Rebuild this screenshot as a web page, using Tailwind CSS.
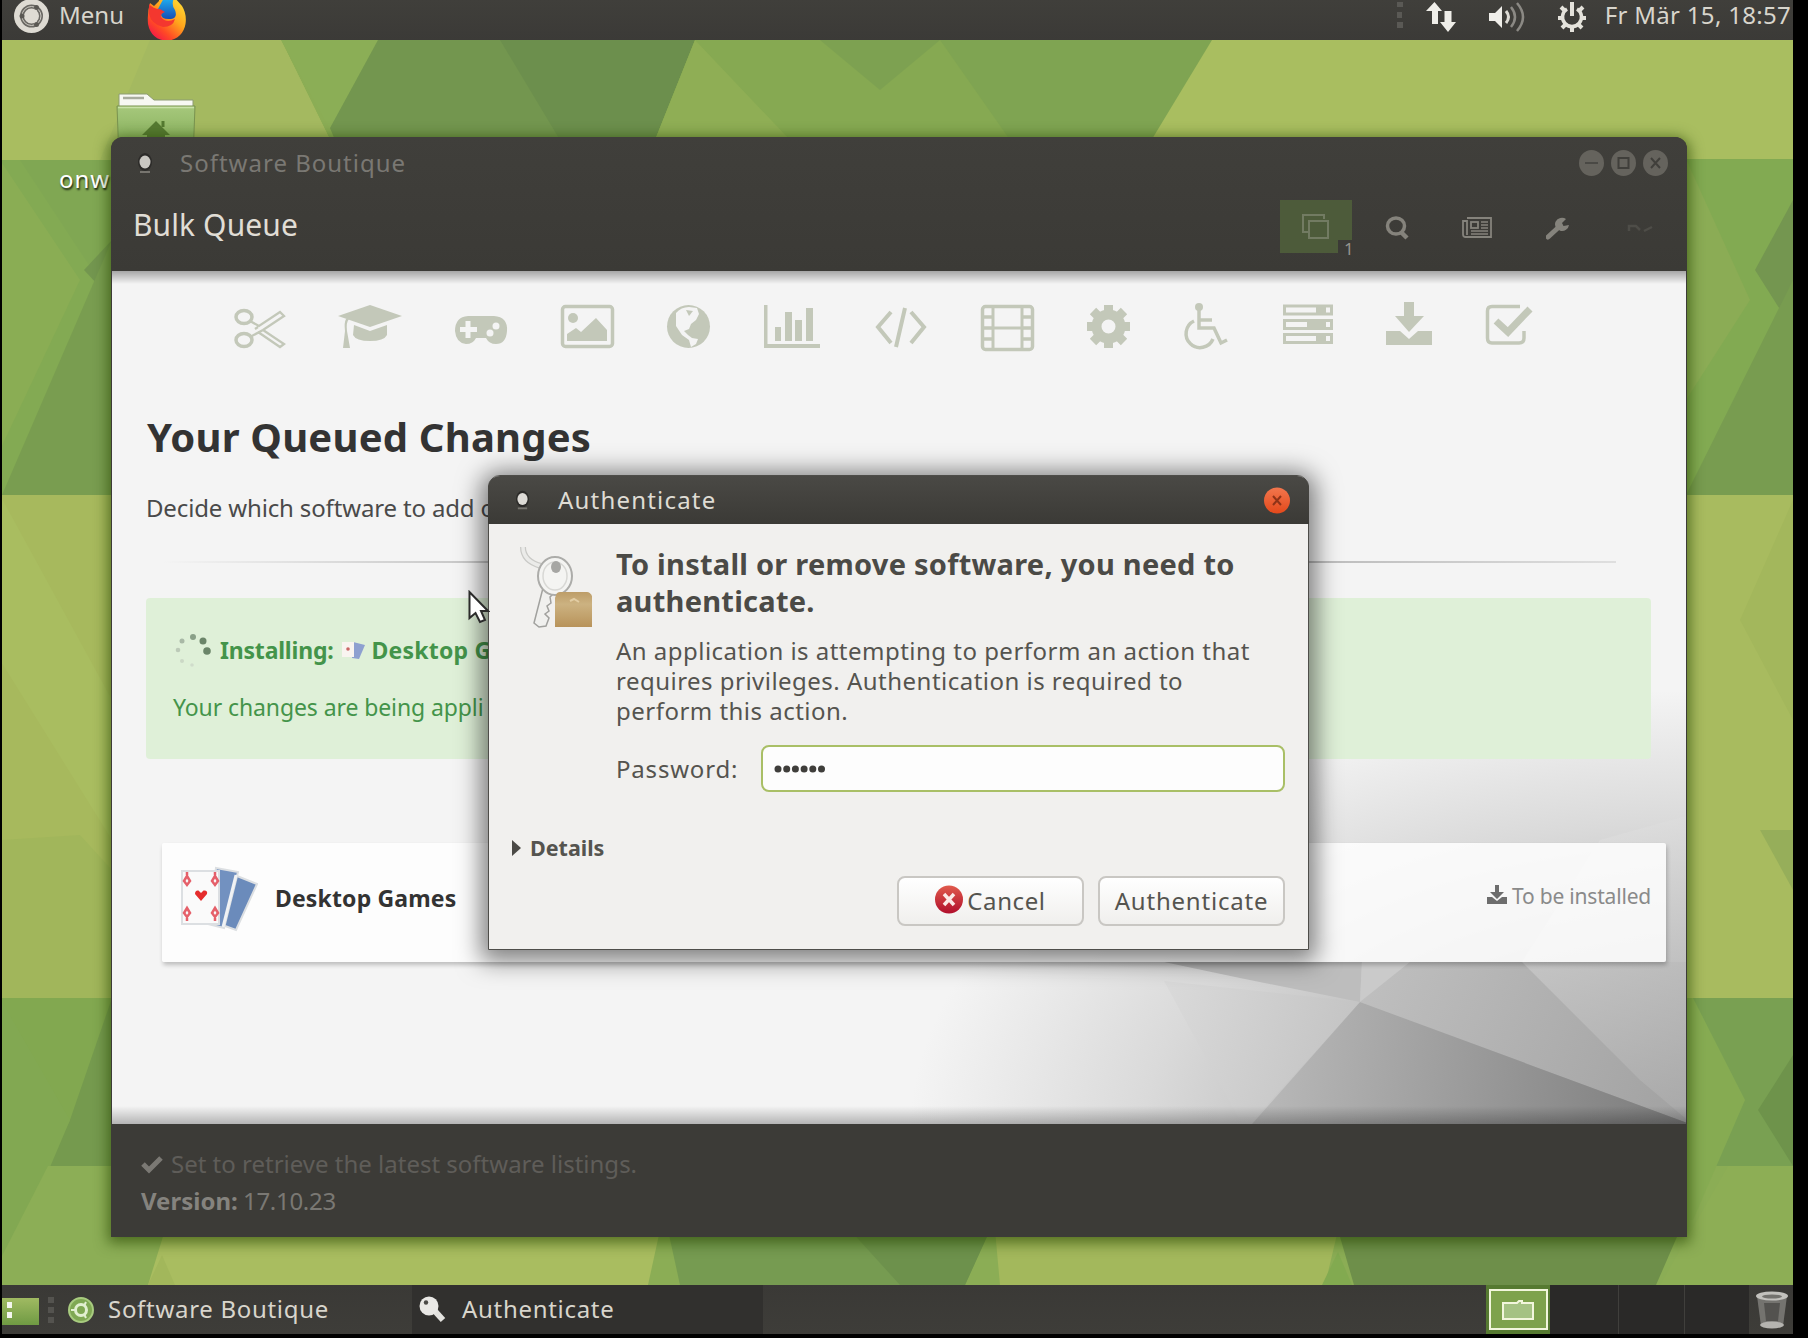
<!DOCTYPE html>
<html lang="en">
<head>
<meta charset="utf-8">
<title>Software Boutique</title>
<script src="https://cdn.jsdelivr.net/npm/@tailwindcss/browser@4"></script>
</head>
<body class="bg-black">
<div class="relative w-[1808px] h-[1338px] overflow-hidden bg-black font-['Noto_Sans',sans-serif] text-[24px] leading-[30px] text-[#d8d5cc] whitespace-nowrap">

  <div class="ml-[2px] w-[1791px] h-[1334px] flex flex-col">
    <!-- Top panel -->
    <header class="h-[40px] shrink-0 flex items-start bg-linear-to-b from-[#403f3b] to-[#3b3a37] pl-[12px] pr-[2px]">
      <svg class="w-[35px] h-[35px] -mt-[1px] shrink-0" viewBox="0 0 35 35">
        <ellipse cx="17.500" cy="17" rx="17.500" ry="17" fill="#dedbd3"/>
        <circle cx="17.500" cy="17" r="9.500" fill="none" stroke="#6a6863" stroke-width="4"/>
        <circle cx="17.500" cy="17" r="9.500" fill="none" stroke="#cfccc4" stroke-width="1"/>
        <path d="M17 17L4 17M18 17L24 6M18 17L24 28" stroke="#dedbd3" stroke-width="3"/>
        <circle cx="8" cy="17" r="2.500" fill="#5a5853"/><circle cx="22.500" cy="8.500" r="2.500" fill="#5a5853"/><circle cx="22.500" cy="25.500" r="2.500" fill="#5a5853"/>
        <circle cx="17.500" cy="17" r="5.500" fill="#dedbd3"/>
      </svg>
      <span class="ml-[10px]">Menu</span>
      <svg class="ml-[23px] w-[40px] h-[41px] shrink-0" viewBox="0 0 40 41">
        <defs>
          <linearGradient id="fx" x1="1" y1="0" x2="0.200" y2="1"><stop offset="0" stop-color="#ffe93b"/><stop offset=".45" stop-color="#ffa51c"/><stop offset=".75" stop-color="#ff4a25"/><stop offset="1" stop-color="#f2134c"/></linearGradient>
          <linearGradient id="fb" x1="0" y1="0" x2="0" y2="1"><stop offset="0" stop-color="#1fb0f0"/><stop offset="1" stop-color="#174db4"/></linearGradient>
        </defs>
        <path d="M12 -2H28L35 6Q40 14 38.500 24Q36 38 21 41Q4 40 1 24Q0 12 3 3L7 6L12 1Z" fill="url(#fx)"/>
        <path d="M17 -2H27Q24 5 28 10Q31 18 24 19Q13 20 14 12L11 9Q14 3 17 -2Z" fill="url(#fb)"/>
        <path d="M2 4Q6 9 13 9L18 12Q13 14 14 17Q19 24 28 19Q26 27 16 27Q4 24 2 14Z" fill="#f4372f"/>
      </svg>
      <div class="flex-1"></div>
      <svg class="w-[8px] h-[34px] shrink-0" viewBox="0 0 8 34" fill="#5a5955"><rect x="1" y="2" width="6" height="5"/><rect x="1" y="12" width="5" height="6"/><rect x="1" y="22" width="6" height="6"/></svg>
      <svg class="ml-[22px] w-[30px] h-[34px] shrink-0" viewBox="0 0 30 34" fill="#efeee9"><path d="M8.500 2L16 11H12V24H6V11H0ZM22 32L14 22H18.500V11H25.500V22H30Z"/></svg>
      <svg class="ml-[33px] w-[36px] h-[34px] shrink-0" viewBox="0 0 36 34"><path d="M0 13H6L13 6V28L6 21H0Z" fill="#efeee9"/><path d="M17 11Q22 17 17 23" fill="none" stroke="#dddbd5" stroke-width="3"/><path d="M22 7Q30 17 22 27M28 3Q40 17 28 31" fill="none" stroke="#8b8984" stroke-width="2.500"/></svg>
      <svg class="ml-[32px] w-[30px] h-[34px] shrink-0" viewBox="0 0 30 34" fill="none" stroke="#e4e2db"><path d="M10 9A9.500 9.500 0 1 0 20 9" stroke-width="3.500"/><path d="M15 2V16" stroke-width="4"/><path d="M5 18H1M29 18H25M7 10L4 7M23 10L26 7M8 25L5 28M22 25L25 28M15 27V32" stroke-width="4"/></svg>
      <span class="ml-[18px] tracking-[0.3px]">Fr Mär 15, 18:57</span>
    </header>

    <!-- Wallpaper -->
    <main class="h-[1245px] shrink-0 relative overflow-hidden bg-[#8aad53]">
      <svg class="absolute inset-0 w-[1791px] h-[1245px]" viewBox="2 40 1791 1245">
        <rect x="0" y="40" width="1808" height="1245" fill="#8bad55"/>
        <path d="M0 40H281L340 160H0Z" fill="#a9bd60"/>
        <path d="M150 40H281L340 160H100Z" fill="#a4b960"/>
        <path d="M281 40H378L330 130Z" fill="#8bae56"/>
        <path d="M378 40H695L655 140H335L330 128Z" fill="#73964f"/>
        <path d="M500 40H695L655 140H560Z" fill="#6c8f4d"/>
        <path d="M695 40H1212L1170 140H655Z" fill="#86a952"/>
        <path d="M695 40L790 140H655Z" fill="#8fae55"/>
        <path d="M820 40H940L880 90Z" fill="#7da151"/>
        <path d="M940 40H1212L1170 140H1010Z" fill="#7fa452"/>
        <path d="M1212 40H1793V159H1140Z" fill="#a9be60"/>
        <path d="M0 160H120V500H0Z" fill="#83aa53"/>
        <path d="M20 160L112 300V160Z" fill="#80a753"/>
        <path d="M112 240L84 270L112 300Z" fill="#73964f"/>
        <path d="M112 240L2 495H112Z" fill="#799d50"/>
        <path d="M0 160L80 280L0 450Z" fill="#8aad54"/>
        <path d="M0 495H120V1000H0Z" fill="#a7b95d"/>
        <path d="M0 495L112 700V840L0 660Z" fill="#a9bd60"/>
        <path d="M0 840L80 835L112 870V1000H0Z" fill="#a1b65b"/>
        <path d="M0 998H120V1166H0Z" fill="#82a850"/>
        <path d="M70 1120L112 998V1166H48Z" fill="#759a4e"/>
        <path d="M0 998L70 1120L0 1285Z" fill="#82a852"/>
        <path d="M48 1166H120V1285H0V1260Z" fill="#8cae56"/>
        <path d="M1680 159H1793V495H1680Z" fill="#82aa52"/>
        <path d="M1686 159L1750 300L1686 400Z" fill="#8bac55"/>
        <path d="M1793 200L1755 270L1793 330Z" fill="#749650"/>
        <path d="M1686 495L1793 280V495Z" fill="#789c50"/>
        <path d="M1680 495H1793V998H1680Z" fill="#a8bb5f"/>
        <path d="M1793 500L1740 620L1793 720Z" fill="#a3b75c"/>
        <path d="M1760 830H1793V890Z" fill="#96ae5a"/>
        <path d="M1680 998H1793V1166H1680Z" fill="#79a052"/>
        <path d="M1680 998H1693L1745 1100L1693 1220H1680Z" fill="#86ab52"/>
        <path d="M1793 1055L1758 1110L1793 1166Z" fill="#6e934b"/>
        <path d="M1728 1166H1793V1285H1660Z" fill="#8dae55"/>
        <path d="M165 1230H660L648 1285H148Z" fill="#a9bd60"/>
        <path d="M148 1285L162 1255L175 1285Z" fill="#a2b75b"/>
        <path d="M668 1230H990L965 1285H680Z" fill="#769b51"/>
        <path d="M850 1230H990L965 1285H900Z" fill="#6d914c"/>
        <path d="M995 1230H1338L1325 1285H1000Z" fill="#a3b85c"/>
        <path d="M1338 1252L1322 1285H1352Z" fill="#82aa50"/>
        <path d="M1338 1230H1680L1656 1285H1354Z" fill="#6e8f4a"/>
      </svg>

      <!-- Home folder -->
      <div class="absolute left-[57px] top-[53px] w-[120px]">
        <svg class="ml-[57px] w-[80px] h-[66px]" viewBox="0 0 80 66">
          <defs><linearGradient id="fo" x1="0" y1="0" x2="0" y2="1"><stop offset="0" stop-color="#a6c87c"/><stop offset="1" stop-color="#7ba64e"/></linearGradient></defs>
          <path d="M3 1H31L38 7H77V16H3Z" fill="#f7f8f3" stroke="#8d9c72" stroke-width="1"/><path d="M7 5H28" stroke="#a8ac9e" stroke-width="2.500"/>
          <path d="M1 13H79L77 66H3Z" fill="url(#fo)" stroke="#78924f" stroke-width="1"/>
          <path d="M2 14.500H78" stroke="#c9e2a9" stroke-width="1.500"/>
          <path d="M40 28L54 42H49V52H31V42H26Z" fill="#557a31"/><path d="M47 28V34" stroke="#557a31" stroke-width="3"/>
        </svg>
        <p class="mt-[5px] tracking-[1px] text-white [text-shadow:1px_2px_2px_#000c]">onw</p>
      </div>

      <!-- Software Boutique window -->
      <section class="absolute left-[109px] top-[97px] w-[1576px] h-[1100px] rounded-t-[12px] shadow-[0_3px_14px_3px_rgba(40,70,0,0.65)] bg-[#3c3b37] flex flex-col">
        <div class="h-[134px] shrink-0 rounded-t-[12px] bg-linear-to-b from-[#403f3b] to-[#3b3a36]">
          <div class="flex items-center h-[50px] pl-[27px] pr-[18px] pt-[2px]">
            <svg class="w-[14px] h-[24px]" viewBox="0 0 14 24"><ellipse cx="7" cy="11" rx="7" ry="9" fill="#2c2b29"/><ellipse cx="7" cy="11" rx="5.500" ry="6.500" fill="#c9c7c2"/><path d="M2 21H12" stroke="#77756f" stroke-width="2"/></svg>
            <h1 class="ml-[28px] tracking-[1px] text-[#7a7873]">Software Boutique</h1>
            <div class="ml-auto flex gap-[5px]">
              <svg class="w-[27px] h-[28px]" viewBox="0 0 27 28"><ellipse cx="13.500" cy="14" rx="12.500" ry="13" fill="#65635d"/><path d="M7 14H20" stroke="#4a4945" stroke-width="2"/></svg>
              <svg class="w-[27px] h-[28px]" viewBox="0 0 27 28"><ellipse cx="13.500" cy="14" rx="12.500" ry="13" fill="#65635d"/><rect x="8.500" y="9" width="10" height="10" fill="none" stroke="#403f3b" stroke-width="2"/></svg>
              <svg class="w-[27px] h-[28px]" viewBox="0 0 27 28"><ellipse cx="13.500" cy="14" rx="12.500" ry="13" fill="#65635d"/><path d="M9 9L18 19M18 9L9 19" stroke="#403f3b" stroke-width="2"/></svg>
            </div>
          </div>
          <div class="flex pl-[22px]">
            <h2 class="mt-[20px] text-[30px] leading-[36px] tracking-[0.1px] text-[#e0ddd5]">Bulk Queue</h2>
            <nav class="ml-auto flex text-[#85837c]">
              <div class="relative mt-[13px] w-[72px] h-[53px] bg-[#4d5b3a]">
                <svg class="absolute left-[22px] top-[14px] w-[28px] h-[26px]" viewBox="0 0 28 26" fill="none" stroke="#727b62" stroke-width="2"><path d="M22 5V1H1V18H6"/><rect x="7" y="7" width="19" height="17"/></svg>
                <span class="absolute right-0 bottom-0 w-[14px] h-[13px] bg-[#3b3a36]"></span>
                <span class="absolute right-[-6px] bottom-[-5px] w-[14px] text-[17px] leading-[18px] text-[#96948d]">1</span>
              </div>
              <svg class="mt-[29px] ml-[33px] w-[24px] h-[24px]" viewBox="0 0 24 24" fill="none" stroke="currentColor"><ellipse cx="11" cy="10" rx="8.500" ry="8" stroke-width="3.500"/><path d="M16 16L22 22" stroke-width="4.500"/></svg>
              <svg class="mt-[30px] ml-[53px] w-[30px] h-[21px]" viewBox="0 0 30 21" fill="none" stroke="currentColor" stroke-width="1.800"><path d="M5 1H29V20H3Q1 20 1 17V4H5V18"/><rect x="9" y="5" width="7" height="6"/><path d="M19 5H26M19 8H26M19 11H26M9 14H26M9 17H26" stroke-width="1.500"/></svg>
              <svg class="mt-[30px] ml-[54px] w-[24px] h-[23px]" viewBox="0 0 24 23"><path d="M2 20L14 9" stroke="currentColor" stroke-width="5" stroke-linecap="round"/><path d="M20 2A7 6.500 0 1 0 23 8L17.500 9L16 6Z" fill="currentColor"/></svg>
              <svg class="mt-[36px] ml-[57px] mr-[34px] w-[26px] h-[12px]" viewBox="0 0 26 12" fill="none" stroke="#4e4d48" stroke-width="2.500"><path d="M2 8V3H9L13 7M17 8L25 4"/></svg>
            </nav>
          </div>
        </div>

        <div class="relative h-[853px] shrink-0 mx-[1px] bg-[#f4f4f4] overflow-hidden text-[#4a4a4a]">
          <svg class="absolute left-0 bottom-0 w-[1574px] h-[853px]" viewBox="112 271 1574 853">
            <defs>
              <radialGradient id="sh" gradientUnits="userSpaceOnUse" cx="0" cy="0" r="1" gradientTransform="translate(1690 1130) scale(780 440)"><stop offset="0" stop-color="#8f8f8f"/><stop offset=".45" stop-color="#bebebe"/><stop offset=".7" stop-color="#dadada"/><stop offset="1" stop-color="#f4f4f4"/></radialGradient>
              <linearGradient id="p1" gradientUnits="userSpaceOnUse" x1="1250" y1="1080" x2="1680" y2="1124"><stop offset="0" stop-color="#bababa"/><stop offset="1" stop-color="#7c7c7c"/></linearGradient>
              <linearGradient id="p2" gradientUnits="userSpaceOnUse" x1="1360" y1="960" x2="1680" y2="1110"><stop offset="0" stop-color="#c0c0c0"/><stop offset="1" stop-color="#a2a2a2"/></linearGradient>
              <linearGradient id="p3" gradientUnits="userSpaceOnUse" x1="1600" y1="780" x2="1680" y2="1110"><stop offset="0" stop-color="#e6e6e6"/><stop offset="1" stop-color="#adadad"/></linearGradient>
              <linearGradient id="p4" gradientUnits="userSpaceOnUse" x1="1164" y1="980" x2="1360" y2="1040"><stop offset="0" stop-color="#dadada"/><stop offset="1" stop-color="#c3c3c3"/></linearGradient>
              <linearGradient id="ed" x1="0" y1="0" x2="0" y2="1"><stop offset="0" stop-color="#000" stop-opacity="0"/><stop offset="1" stop-color="#000" stop-opacity=".26"/></linearGradient>
              <linearGradient id="et" x1="0" y1="1" x2="0" y2="0"><stop offset="0" stop-color="#000" stop-opacity="0"/><stop offset="1" stop-color="#000" stop-opacity=".32"/></linearGradient>
            </defs>
            <rect x="900" y="600" width="800" height="530" fill="url(#sh)"/>
            <path d="M1164 981L1360 1002L1256 1117L1238 1117Z" fill="url(#p4)"/>
            <path d="M1164 962H1362L1360 1002L1240 978Z" fill="#bdbdbd"/>
            <path d="M1362 962H1410L1360 1002Z" fill="#cacaca"/>
            <path d="M1410 962H1690V1124L1360 1002Z" fill="url(#p2)"/>
            <path d="M1522 962L1600 840L1690 815V1122L1640 1080Z" fill="url(#p3)" opacity=".7"/>
            <path d="M1360 1002L1690 1124H1252Z" fill="url(#p1)"/>
            <rect x="112" y="1106" width="1574" height="18" fill="url(#ed)"/>
            <rect x="112" y="271" width="1574" height="13" fill="url(#et)"/>
          </svg>

          <div class="relative">
            <!-- Category icons -->
            <div class="flex pt-[27px] pl-[115px] text-[#c3c8b9]">
              <svg class="w-[60px] h-[60px] overflow-visible" viewBox="0 0 60 60" fill="none" stroke="currentColor" stroke-width="3.500"><ellipse cx="17" cy="19" rx="8" ry="6.500"/><ellipse cx="17" cy="42" rx="8" ry="6.500"/><path d="M23 23L32 28L53 14L57 18L36 32L23 39M31 29L28 31M36 32L57 46L53 49L31 34" stroke-width="2.300"/></svg>
              <svg class="ml-[52px] w-[60px] h-[60px] overflow-visible" viewBox="0 0 60 60" fill="currentColor"><path d="M31 7L63 18L31 29L-1 18Z"/><path d="M15 27L31 33L48 27V37Q45 43 31 43Q17 43 14 37Z"/><path d="M10 21Q7 24 8 33L11 50H4L6 33Q5 24 7 21Z"/></svg>
              <svg class="ml-[52px] w-[60px] h-[60px] overflow-visible" viewBox="0 0 60 60"><path d="M17 18H43Q57 19 56 33Q55 46 45 46Q38 46 35 40H25Q22 46 15 46Q5 45 4 33Q4 19 17 18Z" fill="currentColor"/><path d="M17 23V40M9 31.500H26" stroke="#f4f4f4" stroke-width="5"/><circle cx="45" cy="28" r="3.500" fill="#f4f4f4"/><circle cx="39" cy="35" r="3.500" fill="#f4f4f4"/></svg>
              <svg class="ml-[46px] w-[60px] h-[60px] overflow-visible" viewBox="0 0 60 60" fill="currentColor"><rect x="5.500" y="8.500" width="50" height="40" rx="3" fill="none" stroke="currentColor" stroke-width="3.500"/><circle cx="16" cy="20" r="5"/><path d="M10 43V36L19 30L24 34L39 20L50 32V43Z"/></svg>
              <svg class="ml-[41px] w-[60px] h-[60px] overflow-visible" viewBox="0 0 60 60"><circle cx="30.500" cy="28.500" r="21.500" fill="currentColor"/><path d="M18 15Q23 9 31 9L39 10L41 16L38 22L33 26L31 31L26 33L30 37L34 40L40 41L38 46L33 49L31 42L24 37L18 28Z" fill="#f4f4f4"/><path d="M28 12L35 13L31 18Z" fill="currentColor"/></svg>
              <svg class="ml-[43px] w-[60px] h-[60px] overflow-visible" viewBox="0 0 60 60" fill="currentColor"><path d="M3 7H6.500V46H59V50H3Z"/><path d="M14 29H20V43H14ZM24 14H31V43H24ZM34 22H41V43H34ZM45 10H52V43H45Z"/></svg>
              <svg class="ml-[50px] w-[60px] h-[60px] overflow-visible" viewBox="0 0 60 60" fill="none" stroke="currentColor" stroke-width="4"><path d="M20 14L7 29L20 45M40 14L53 29L40 45M34 10L25 49"/></svg>
              <svg class="ml-[46px] w-[60px] h-[60px] overflow-visible" viewBox="0 0 60 60" fill="none" stroke="currentColor"><rect x="5.500" y="8.500" width="50" height="43" rx="3" stroke-width="3.500"/><path d="M16 8V52M45 8V52M16 30H45" stroke-width="3"/><path d="M5 19H16M5 30H16M5 41H16M45 19H56M45 30H56M45 41H56" stroke-width="3.500"/></svg>
              <svg class="ml-[41px] w-[60px] h-[60px] overflow-visible" viewBox="0 0 60 60" fill="none" stroke="currentColor"><circle cx="30.500" cy="28.500" r="12" stroke-width="10"/><path d="M30.500 7V14M30.500 43V50M9 28.500H16M45 28.500H52M15 13L20 18M46 13L41 18M15 44L20 39M46 44L41 39" stroke-width="9"/></svg>
              <svg class="ml-[37px] w-[60px] h-[60px] overflow-visible" viewBox="0 0 60 60" fill="none" stroke="currentColor" stroke-width="3.500"><circle cx="24" cy="9" r="4" fill="currentColor" stroke="none"/><path d="M24 10V30H39L46 45L52 42M24 22H37"/><path d="M19 23A14 14 0 1 0 38 41"/></svg>
              <svg class="ml-[43px] w-[60px] h-[60px] overflow-visible" viewBox="0 0 60 60" fill="none" stroke="currentColor" stroke-width="3"><path d="M6.500 8H53.500V16H6.500ZM6.500 22.500H53.500V30.500H6.500ZM6.500 36.500H53.500V44.500H6.500Z"/><path d="M38 12H48M29 26.500H48M38 40.500H48" stroke-width="6"/></svg>
              <svg class="ml-[41px] w-[60px] h-[60px] overflow-visible" viewBox="0 0 60 60" fill="currentColor"><path d="M25 4H35V18H45L30 34L16 18H25Z"/><path d="M7 33H21L30 41L39 33H53V47H7Z"/></svg>
              <svg class="ml-[39px] w-[60px] h-[60px] overflow-visible" viewBox="0 0 60 60" fill="none" stroke="currentColor"><path d="M42 8.500H14Q9.500 8.500 9.500 13V40Q9.500 45 14 45H41Q46 45 46 40V33" stroke-width="3.500"/><path d="M18 23L30 34L52 11" stroke-width="7"/></svg>
            </div>

            <h2 class="mt-[52px] ml-[35px] text-[40px] leading-[54px] tracking-[0.2px] font-bold text-[#333]">Your Queued Changes</h2>
            <p class="mt-[29px] ml-[34px] tracking-[-0.15px]">Decide which software to add o</p>
            <div class="mt-[38px] ml-[50px] mr-[70px] h-[2px] bg-linear-to-r from-transparent via-[#8a8a8a] to-[#8a8a8a]/20"></div>

            <div class="mt-[35px] ml-[34px] w-[1505px] h-[161px] rounded-[4px] bg-[#dff0d8] text-[23px] text-[#44944a] pt-[34px] pl-[27px]">
              <div class="flex items-center font-bold">
                <svg class="w-[40px] h-[36px] shrink-0" viewBox="0 0 40 36"><g fill="#8aa088"><circle cx="20" cy="5" r="3"/><circle cx="30" cy="9" r="3.500" fill="#6b8569"/><circle cx="34" cy="19" r="3.800" fill="#6b8569"/><circle cx="9" cy="9" r="2.500" fill="#a9b9a6"/><circle cx="5" cy="18" r="2.300" fill="#bccab8"/><circle cx="9" cy="29" r="2" fill="#cbd8c6"/><circle cx="19" cy="33" r="1.800" fill="#d0dccb"/></g></svg>
                <span class="ml-[7px] tracking-[-0.2px]">Installing:</span>
                <svg class="ml-[7px] w-[24px] h-[20px] shrink-0" viewBox="0 0 24 20"><path d="M12 2L24 5L18 19L11 18Z" fill="#8ea0d0"/><rect x="1" y="2" width="12" height="15" fill="#f9f4f0"/><circle cx="7" cy="9" r="1.800" fill="#ca6666"/></svg>
                <span class="ml-[7px] tracking-[0.2px]">Desktop G</span>
              </div>
              <p class="mt-[24px] tracking-[-0.1px]">Your changes are being appli</p>
            </div>

            <div class="mt-[84px] ml-[50px] w-[1504px] h-[119px] rounded-[2px] bg-white/85 shadow-[1px_3px_4px_rgba(0,0,0,0.22)] flex items-center pl-[18px] pr-[15px]">
              <svg class="w-[78px] h-[68px] -mt-[9px] shrink-0" viewBox="0 0 78 68">
                <g stroke="#dcdfe2" stroke-width="2"><path d="M52 10L77 20L56 66L34 58Z" fill="#6b8bbb"/><path d="M36 4L58 8L44 64L28 60Z" fill="#7291c0"/><path d="M2 7H39V60H2Z" fill="#fafafa"/></g>
                <path d="M56 11L43 63" stroke="#f0f2f4" stroke-width="3"/>
                <path d="M21 37L15 30Q15 26 18.500 26.500L21 29L23.500 26.500Q28 26 27 30Z" fill="#e52d2d"/>
                <g fill="none" stroke="#e5606a" stroke-width="2.500"><path d="M7 8V11M7 12L10 17L7 21L4 17ZM35 8V11M35 12L38 17L35 21L32 17ZM7 57V54M7 44L10 49L7 53L4 49ZM35 57V54M35 44L38 49L35 53L32 49Z"/></g>
              </svg>
              <h3 class="ml-[17px] -mt-[9px] text-[23px] tracking-[0.15px] font-bold text-[#333]">Desktop Games</h3>
              <div class="ml-auto flex items-center text-[21px] tracking-[-0.2px] text-[#8a8a8a] -mt-[13px]">
                <svg class="w-[20px] h-[20px] mr-[5px] -mt-[2px]" viewBox="0 0 20 20" fill="#6d6d6d"><path d="M8 0H12V7H17L10 14L3 7H8ZM0 12H5L10 16L15 12H20V19H0Z"/></svg>
                <span>To be installed</span>
              </div>
            </div>
          </div>
        </div>

        <footer class="flex-1 pl-[30px] pt-[26px] text-[#5f5d59]">
          <p class="flex items-center leading-[30px] -mt-[1px]"><svg class="w-[22px] h-[20px] mr-[8px]" viewBox="0 0 22 20"><path d="M2 10L8 16L20 4" fill="none" stroke="#7b7974" stroke-width="5"/></svg>Set to retrieve the latest software listings.</p>
          <p class="mt-[7px] text-[#85837e]"><b>Version:</b> <span class="-ml-[1px] tracking-[-0.3px] text-[#7a7873]">17.10.23</span></p>
        </footer>
      </section>

      <!-- Authenticate dialog -->
      <section class="absolute left-[486px] top-[435px] w-[821px] h-[475px] rounded-t-[12px] border border-[#4e4d49] bg-[#f1f0ee] shadow-[0_4px_24px_7px_rgba(0,0,0,0.5)] text-[#55544f] flex flex-col">
        <div class="h-[48px] -mx-px shrink-0 rounded-t-[12px] bg-linear-to-b from-[#4a4945] to-[#3b3a36] flex items-center pl-[28px] pr-[19px] text-[#dfdcd4]">
          <svg class="w-[13px] h-[24px]" viewBox="0 0 14 24"><ellipse cx="7" cy="11" rx="7" ry="9" fill="#2c2b29"/><ellipse cx="7" cy="11" rx="5.500" ry="6.500" fill="#dddbd6"/><path d="M2 21H12" stroke="#77756f" stroke-width="2"/></svg>
          <h2 class="ml-[29px] -mt-[1px] tracking-[1.2px]">Authenticate</h2>
          <svg class="ml-auto w-[26px] h-[27px]" viewBox="0 0 26 27"><defs><linearGradient id="cl" x1="0" y1="0" x2="0" y2="1"><stop offset="0" stop-color="#f2764d"/><stop offset="1" stop-color="#e4491b"/></linearGradient></defs><ellipse cx="13" cy="13.500" rx="13" ry="13" fill="url(#cl)"/><path d="M9 9L17 18M17 9L9 18" stroke="#8f3318" stroke-width="2"/></svg>
        </div>
        <div class="flex pl-[30px] pt-[20px]">
          <svg class="w-[77px] h-[86px] shrink-0" viewBox="0 0 77 86">
            <defs><linearGradient id="bx" x1="0" y1="0" x2="0" y2="1"><stop offset="0" stop-color="#bd9d68"/><stop offset=".35" stop-color="#ccb281"/><stop offset="1" stop-color="#b8935a"/></linearGradient></defs>
            <path d="M4 3Q4 17 22 22" fill="none" stroke="#c9c9c6" stroke-width="6"/>
            <path d="M4 3Q4 17 22 22" fill="none" stroke="#ebebe9" stroke-width="3.500"/>
            <path d="M24 44L15 79L20 83L27 82L30 74L26 70L30 67L28 62L32 59L31 53L36 48Z" fill="#f0f0ee" stroke="#a1a19e" stroke-width="1.500"/>
            <ellipse cx="36" cy="32" rx="17" ry="19" fill="#f4f4f2" stroke="#acaca9" stroke-width="2"/>
            <ellipse cx="36" cy="32" rx="12" ry="14" fill="none" stroke="#d8d8d5" stroke-width="1.500"/>
            <ellipse cx="37" cy="23" rx="5" ry="6" fill="#a6a6a3"/>
            <path d="M37 51Q38 48 41 48H68Q71 48 73 52V83H36V54Z" fill="url(#bx)"/><path d="M51 57L55 55L60 58" stroke="#e2cda4" stroke-width="2" fill="none"/>
          </svg>
          <div class="ml-[20px] pt-[1px]">
            <h3 class="text-[29px] leading-[37px] font-bold tracking-[0.25px] text-[#4b4a46]">To install or remove software, you need to<br>authenticate.</h3>
            <p class="mt-[17px] leading-[30px] tracking-[0.48px]">An application is attempting to perform an action that<br>requires privileges. Authentication is required to<br>perform this action.</p>
            <div class="flex items-center mt-[19px]">
              <label class="tracking-[0.8px] w-[145px]">Password:</label>
              <div class="w-[524px] h-[47px] rounded-[8px] border-2 border-[#a9bf66] bg-[#fdfdfd] flex items-center pl-[11px]">
                <svg class="w-[52px] h-[10px]" viewBox="0 0 52 10" fill="#3f3e3b"><circle cx="4" cy="5" r="3.500"/><circle cx="12.700" cy="5" r="3.500"/><circle cx="21.400" cy="5" r="3.500"/><circle cx="30.100" cy="5" r="3.500"/><circle cx="38.800" cy="5" r="3.500"/><circle cx="47.500" cy="5" r="3.500"/></svg>
              </div>
            </div>
          </div>
        </div>
        <div class="flex items-center pl-[22px] mt-[41px] text-[21.5px] font-bold"><svg class="w-[11px] h-[16px] mr-[8px]" viewBox="0 0 11 16"><path d="M1 0L10 8L1 16Z" fill="#4b4a46"/></svg>Details</div>
        <div class="flex justify-end gap-[14px] pr-[23px] mt-[13px]">
          <button class="w-[187px] h-[50px] rounded-[8px] border-2 border-[#c9c7c3] bg-linear-to-b from-white to-[#f0efed] flex items-center justify-center tracking-[0.6px] pb-[1px]">
            <svg class="w-[28px] h-[29px] mr-[4px] -mt-[3px] shrink-0" viewBox="0 0 28 29"><defs><linearGradient id="cc" x1="0" y1="0" x2="0" y2="1"><stop offset="0" stop-color="#e05a4c"/><stop offset="1" stop-color="#b10f2c"/></linearGradient></defs><circle cx="14" cy="14.500" r="14" fill="url(#cc)"/><path d="M9 9L19 20M19 9L9 20" stroke="#fbe9e6" stroke-width="3.500"/></svg>Cancel
          </button>
          <button class="w-[187px] h-[50px] rounded-[8px] border-2 border-[#c9c7c3] bg-linear-to-b from-white to-[#f0efed] tracking-[0.8px] pb-[1px]">Authenticate</button>
        </div>
      </section>

      <!-- Pointer -->
      <svg class="absolute left-[466px] top-[550px] w-[22px] h-[34px]" viewBox="0 0 22 34"><path d="M1.500 2V28L7.500 23L12 32L17 30L13 21H20Z" fill="#fff" stroke="#2b2b2b" stroke-width="2"/></svg>
    </main>

    <!-- Bottom panel -->
    <footer class="h-[49px] shrink-0 flex items-center bg-linear-to-b from-[#3a3936] to-[#3e3d39]">
      <svg class="w-[37px] h-[30px] shrink-0 mt-[2px]" viewBox="0 0 37 30"><defs><linearGradient id="sd" x1="0" y1="0" x2="0" y2="1"><stop offset="0" stop-color="#a0ba62"/><stop offset="1" stop-color="#6f9a43"/></linearGradient></defs><rect width="37" height="27" y="2" fill="url(#sd)"/><path d="M5 6H10V12H5ZM5 16H10V22H5Z" fill="#f4f6ee"/></svg>
      <svg class="ml-[8px] w-[8px] h-[28px] shrink-0" viewBox="0 0 8 28" fill="#54534f"><rect x="1" y="1" width="6" height="6"/><rect x="1" y="11" width="6" height="6"/><rect x="1" y="21" width="6" height="6"/></svg>
      <svg class="ml-[13px] w-[26px] h-[26px] shrink-0" viewBox="0 0 26 26"><circle cx="13" cy="13" r="12" fill="#7fa853"/><circle cx="13" cy="13" r="12" fill="none" stroke="#a8cb7f" stroke-width="2"/><circle cx="13" cy="13" r="5.500" fill="none" stroke="#e1efd0" stroke-width="3"/><path d="M8 13H3M16 9L18 5M16 17L18 21" stroke="#e1efd0" stroke-width="2"/></svg>
      <span class="ml-[14px] w-[304px] tracking-[0.7px] -mt-[2px]">Software Boutique</span>
      <div class="w-[351px] h-[49px] bg-[#31302e] flex items-center pl-[7px]">
        <svg class="w-[28px] h-[28px] shrink-0" viewBox="0 0 28 28"><path d="M14 13L24 24" stroke="#e3e2df" stroke-width="6"/><ellipse cx="10" cy="10" rx="9.500" ry="9.500" fill="#e9e8e5"/><circle cx="7" cy="6.500" r="2.200" fill="#4a4946"/></svg>
        <span class="ml-[15px] tracking-[0.7px] -mt-[2px]">Authenticate</span>
      </div>
      <div class="ml-auto w-[64px] h-[49px] bg-[#567a31] flex items-center justify-center">
        <div class="w-[59px] h-[41px] border-2 border-[#f2f6dc] bg-[#7ea24c] flex items-center justify-center"><svg class="w-[32px] h-[20px]" viewBox="0 0 32 20"><path d="M1 3H15L17 1H20V3H31V19H1Z" fill="#a5c283" stroke="#f2f6dc" stroke-width="2"/></svg></div>
      </div>
      <div class="w-[199px] h-[49px] flex bg-[#2a2928]"><div class="w-[69px] border-r border-[#403f3c]"></div><div class="w-[66px] border-r border-[#403f3c]"></div></div>
      <svg class="ml-[6px] mr-[4px] w-[34px] h-[38px] shrink-0" viewBox="0 0 34 38"><path d="M2 5L6 35H28L32 5Z" fill="#74736f"/><path d="M9 12H25L23 30H11Z" fill="#53524f"/><ellipse cx="17" cy="5" rx="16" ry="4.500" fill="#c2c1bd"/><ellipse cx="17" cy="5.500" rx="10" ry="2" fill="#73726e"/><ellipse cx="17" cy="34" rx="12" ry="3.500" fill="#b5b4b0"/></svg>
    </footer>
  </div>
</div>
</body>
</html>
